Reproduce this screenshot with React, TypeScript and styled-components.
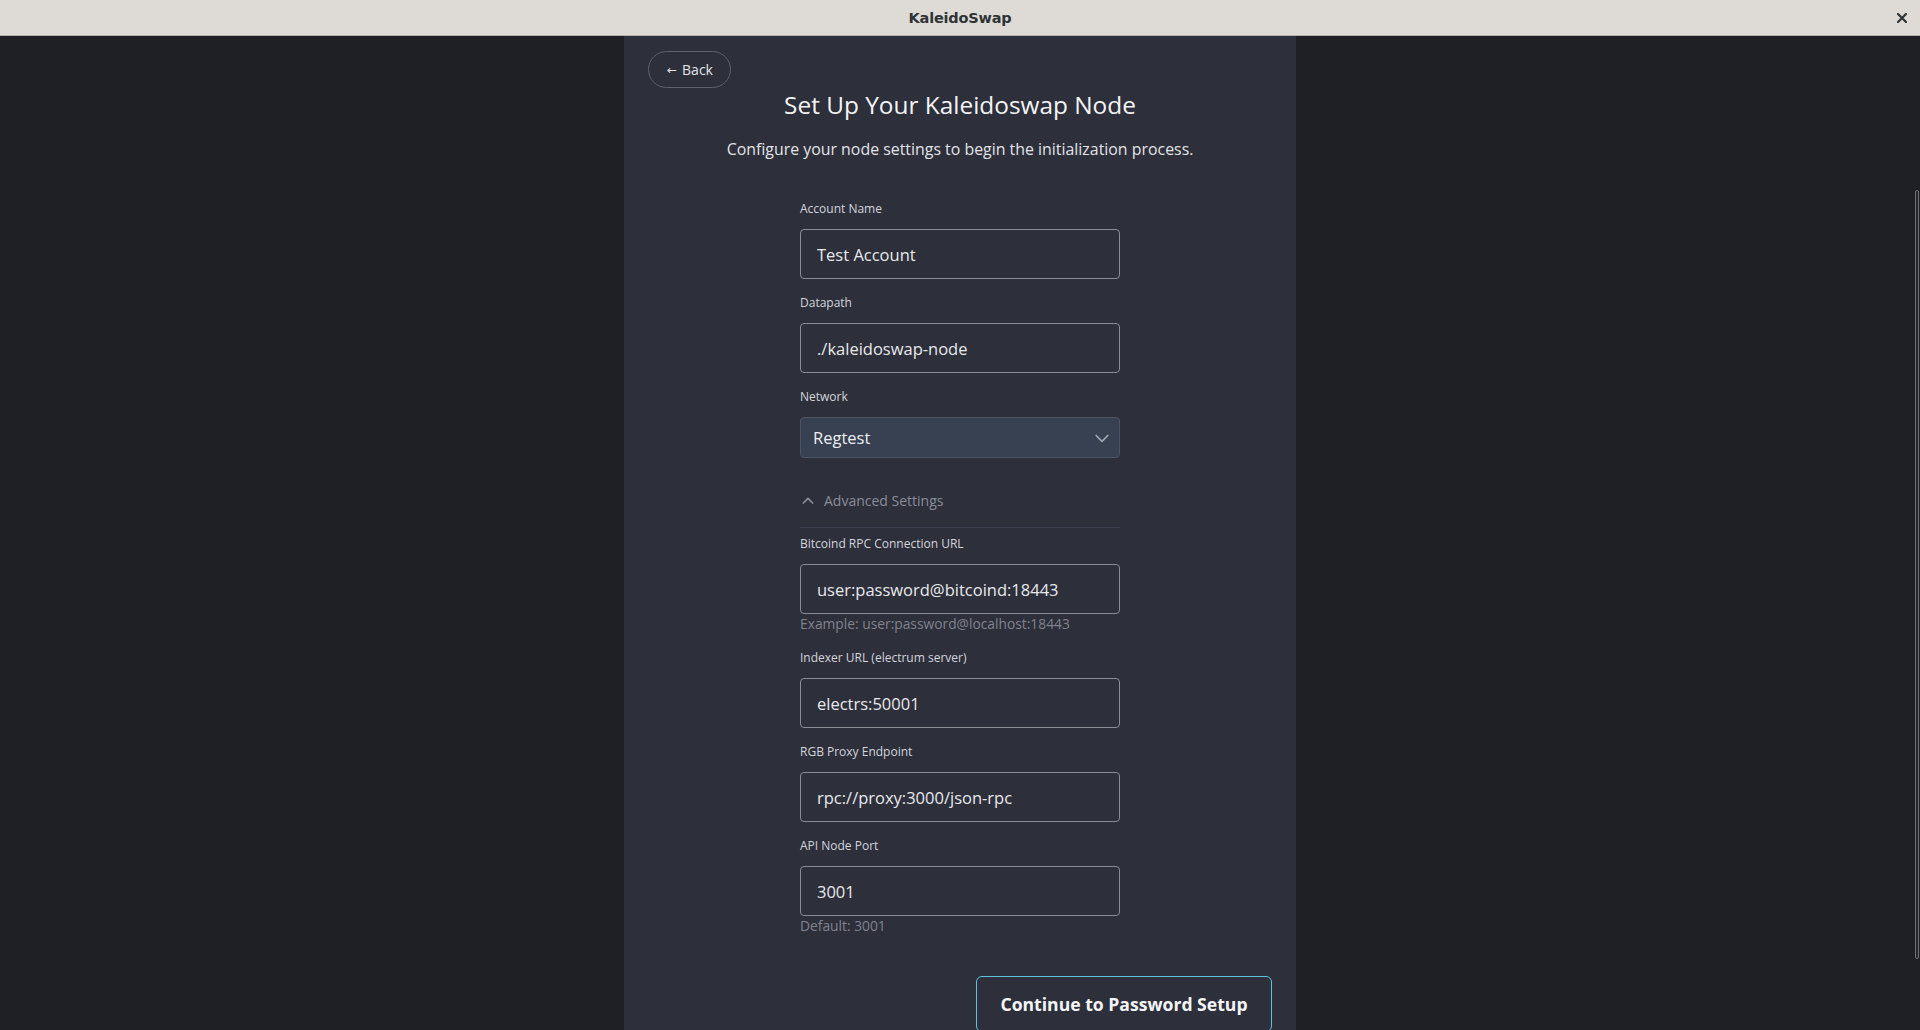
import React from "react";
import styled, { createGlobalStyle } from "styled-components";

const GlobalStyle = createGlobalStyle`
  html, body {
    margin: 0;
    padding: 0;
    height: 100%;
    background: #1f2026;
    overflow: hidden;
  }
  body {
    font-family: "Open Sans", Lato, sans-serif;
    -webkit-font-smoothing: antialiased;
  }
  * { box-sizing: border-box; }
`;

const Window = styled.div`
  display: flex;
  flex-direction: column;
  height: 1030px;
  width: 1920px;
`;

const TitleBar = styled.header`
  height: 36px;
  flex: 0 0 36px;
  display: grid;
  grid-template-columns: 1fr auto 1fr;
  align-items: center;
  background: #dedbd7;
  border-bottom: 1px solid #b9b2aa;
`;

const WindowTitle = styled.div`
  grid-column: 2;
  font-family: "DejaVu Sans", sans-serif;
  font-weight: bold;
  font-size: 14.5px;
  color: #2e3436;
  letter-spacing: -0.2px;
`;

const CloseButton = styled.button`
  grid-column: 3;
  justify-self: end;
  margin-right: 11px;
  width: 14px;
  height: 14px;
  padding: 0;
  border: none;
  background: transparent;
  display: flex;
  align-items: center;
  justify-content: center;
`;

const Main = styled.main`
  position: relative;
  flex: 1;
  overflow: hidden;
  display: flex;
  justify-content: center;
  align-items: flex-start;
`;

const Panel = styled.section`
  width: 672px;
  min-height: 100%;
  background: #2d2f3b;
  padding: 15px 24px 0;
  display: flex;
  flex-direction: column;
  & > * { flex-shrink: 0; }
`;

const BackButton = styled.button`
  align-self: flex-start;
  height: 37px;
  padding: 0 17px 0 18px;
  border: 1px solid #5d606d;
  border-radius: 9999px;
  background: transparent;
  color: #e4e5e9;
  font-family: "Open Sans", sans-serif;
  font-size: 14px;
  display: flex;
  align-items: center;
  gap: 5px;
`;

const Arrow = styled.span`
  font-family: "DejaVu Sans", sans-serif;
  font-size: 12px;
  line-height: 1;
`;

const Title = styled.h1`
  margin: 1px 0 0;
  text-align: center;
  font-size: 24.4px;
  line-height: 32px;
  font-weight: 500;
  color: #f3f4f6;
`;

const Subtitle = styled.p`
  margin: 16px 0 0;
  text-align: center;
  font-size: 15.9px;
  line-height: 24px;
  color: #e2e3e7;
`;

const Form = styled.form`
  width: 320px;
  margin: 40px auto 0;
  display: flex;
  flex-direction: column;
`;

const Field = styled.div`
  display: flex;
  flex-direction: column;
  margin-bottom: 16px;
`;

const Label = styled.label`
  font-size: 12px;
  line-height: 16px;
  margin-bottom: 12px;
  color: #d3d5db;
`;

const TextInput = styled.input`
  height: 50px;
  width: 100%;
  padding: 0 16px;
  border: 1px solid #8c8d94;
  border-radius: 4px;
  background: transparent;
  color: #e8e9ec;
  font-family: "Open Sans", sans-serif;
  font-size: 16.5px;
  outline: none;
`;

const Helper = styled.span`
  font-size: 13.8px;
  line-height: 20px;
  color: #80838e;
`;

const SelectBox = styled.div`
  height: 41px;
  display: flex;
  align-items: center;
  justify-content: space-between;
  padding: 0 7px 0 12px;
  background: #374151;
  border: 1px solid #4b5466;
  border-radius: 4px;
  color: #eceef2;
  font-size: 16.5px;
`;

const AdvancedToggle = styled.button`
  display: flex;
  align-items: center;
  gap: 8px;
  padding: 17px 0 16px 0;
  border: none;
  border-bottom: 1px solid #3b3f4e;
  background: transparent;
  color: #8a8d99;
  font-family: "Open Sans", sans-serif;
  font-size: 14px;
  line-height: 20px;
  text-align: left;
`;

const AdvancedBody = styled.div`
  padding-top: 8px;
  display: flex;
  flex-direction: column;
`;

const ContinueButton = styled.button`
  align-self: flex-end;
  margin-top: 24px;
  height: 56px;
  width: 296px;
  padding: 0;
  border: 1px solid #5ec3dc;
  border-radius: 6px;
  background: transparent;
  color: #f4f5f7;
  font-family: "Open Sans", sans-serif;
  font-size: 17.6px;
  font-weight: 700;
`;

const ScrollThumb = styled.div`
  position: absolute;
  right: 1px;
  top: 154px;
  width: 4px;
  height: 769px;
  border: 1px solid #6c6f76;
  border-radius: 2px;
  background: #25272d;
`;

const Chevron = ({ up }: { up?: boolean }) =>
  up ? (
    <svg width="16" height="16" viewBox="0 0 24 24" fill="none" stroke="#8a8d99"
      strokeWidth="2.6" strokeLinecap="round" strokeLinejoin="round">
      <path d="M5 15l7-7 7 7" />
    </svg>
  ) : (
    <svg width="20" height="20" viewBox="0 0 24 24" fill="none" stroke="#a3a8b3"
      strokeWidth="2" strokeLinecap="round" strokeLinejoin="round">
      <path d="M5 9l7 7 7-7" />
    </svg>
  );

type FieldDef = { label: string; value: string; helper?: string };

const advanced: FieldDef[] = [
  { label: "Bitcoind RPC Connection URL", value: "user:password@bitcoind:18443", helper: "Example: user:password@localhost:18443" },
  { label: "Indexer URL (electrum server)", value: "electrs:50001" },
  { label: "RGB Proxy Endpoint", value: "rpc://proxy:3000/json-rpc" },
  { label: "API Node Port", value: "3001", helper: "Default: 3001" },
];

const InputField = ({ label, value, helper }: FieldDef) => (
  <Field>
    <Label>{label}</Label>
    <TextInput defaultValue={value} />
    {helper && <Helper>{helper}</Helper>}
  </Field>
);

export default function App() {
  return (
    <>
      <GlobalStyle />
      <Window>
        <TitleBar>
          <WindowTitle>KaleidoSwap</WindowTitle>
          <CloseButton aria-label="Close">
            <svg width="10" height="10" viewBox="0 0 10 10">
              <path d="M1 1L9 9M9 1L1 9" stroke="#2e3436" strokeWidth="2.2" strokeLinecap="square" />
            </svg>
          </CloseButton>
        </TitleBar>
        <Main>
          <Panel>
            <BackButton>
              <Arrow>←</Arrow>
              Back
            </BackButton>
            <Title>Set Up Your Kaleidoswap Node</Title>
            <Subtitle>Configure your node settings to begin the initialization process.</Subtitle>
            <Form onSubmit={(e) => e.preventDefault()}>
              <InputField label="Account Name" value="Test Account" />
              <InputField label="Datapath" value="./kaleidoswap-node" />
              <Field>
                <Label>Network</Label>
                <SelectBox>
                  <span>Regtest</span>
                  <Chevron />
                </SelectBox>
              </Field>
              <AdvancedToggle type="button">
                <Chevron up />
                Advanced Settings
              </AdvancedToggle>
              <AdvancedBody>
                {advanced.map((f) => (
                  <InputField key={f.label} {...f} />
                ))}
              </AdvancedBody>
            </Form>
            <ContinueButton>Continue to Password Setup</ContinueButton>
          </Panel>
          <ScrollThumb />
        </Main>
      </Window>
    </>
  );
}
